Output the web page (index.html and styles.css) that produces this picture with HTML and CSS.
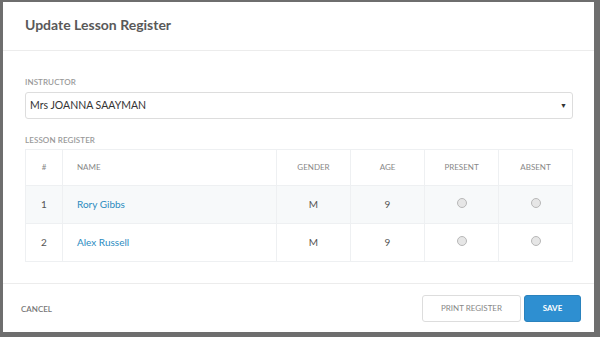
FILE: index.html
```html
<!DOCTYPE html>
<html lang="en">
<head>
    <meta charset="UTF-8">
    <title>Update Lesson Register</title>
    <link rel="stylesheet" href="styles.css">
</head>
<body>

<div class="modal">
    <div class="modal-header">
        <h2>Update Lesson Register</h2>
    </div>
    <div class="modal-body">
        <div class="label">INSTRUCTOR</div>
        <div class="select">
            <span>Mrs JOANNA SAAYMAN</span>
            <span class="caret">&#9660;</span>
        </div>
        <div class="label">LESSON REGISTER</div>
        <table class="register">
            <thead>
                <tr>
                    <th class="col-num">#</th>
                    <th class="col-name">NAME</th>
                    <th class="col-mid">GENDER</th>
                    <th class="col-mid">AGE</th>
                    <th class="col-mid">PRESENT</th>
                    <th>ABSENT</th>
                </tr>
            </thead>
            <tbody>
                <tr class="shade">
                    <td class="col-num">1</td>
                    <td class="col-name"><a href="#">Rory Gibbs</a></td>
                    <td>M</td>
                    <td>9</td>
                    <td><span class="radio"></span></td>
                    <td><span class="radio"></span></td>
                </tr>
                <tr>
                    <td class="col-num">2</td>
                    <td class="col-name"><a href="#">Alex Russell</a></td>
                    <td>M</td>
                    <td>9</td>
                    <td><span class="radio"></span></td>
                    <td><span class="radio"></span></td>
                </tr>
            </tbody>
        </table>
    </div>
    <div class="modal-footer">
        <button class="link-btn">CANCEL</button>
        <div class="actions">
            <button class="print-btn">PRINT REGISTER</button>
            <button class="save-btn">SAVE</button>
        </div>
    </div>
</div>

</body>
</html>
```

FILE: styles.css
```css
html, body {
    margin: 0;
    height: 100%;
}
body {
    background: #6e6e6e;
    font-family: Lato, "Open Sans", sans-serif;
    padding: 2px 6px 5px 3px;
    box-sizing: border-box;
}
.modal {
    background: #fff;
    height: 100%;
    display: flex;
    flex-direction: column;
}
.modal-header {
    height: 48px;
    border-bottom: 1px solid #ececec;
    padding: 0 22px;
    display: flex;
    align-items: center;
}
.modal-header h2 {
    margin: 0 0 3px;
    font-size: 14px;
    font-weight: 700;
    color: #595959;
}
.modal-body {
    padding: 26px 21px 0 22px;
    height: 207px;
}
.label {
    font-size: 8px;
    color: #999;
    font-weight: 600;
    letter-spacing: 0.1px;
    height: 14px;
}
.select {
    height: 25px;
    border: 1px solid #ddd;
    border-radius: 3px;
    display: flex;
    align-items: center;
    justify-content: space-between;
    padding: 0 5px 0 4px;
    font-size: 10.5px;
    color: #333;
    margin: 1px 0 16px;
}
.caret {
    font-size: 7px;
    color: #333;
}
.register {
    width: 100%;
    table-layout: fixed;
    border-collapse: collapse;
    border: 1px solid #eef0f2;
    font-size: 10px;
    color: #555;
}
.register th, .register td {
    border: 1px solid #eef0f2;
    text-align: center;
    padding: 0;
}
.register th {
    height: 35px;
    font-size: 8px;
    font-weight: 400;
    color: #888;
}
.register td {
    height: 37px;
}
.register .col-num {
    width: 36px;
}
.register .col-name {
    text-align: left;
    padding-left: 14px;
    width: 199px;
}
.register .col-mid {
    width: 73px;
}
.shade td {
    background: #f7f9fa;
}
.register a {
    color: #2b8bbf;
    text-decoration: none;
    font-size: 10px;
}
.radio {
    display: inline-block;
    width: 8px;
    height: 8px;
    border-radius: 50%;
    border: 1px solid #b8b8b8;
    background: #e6e6e6;
    margin-top: -6px;
    vertical-align: middle;
}
.modal-footer {
    margin-top: auto;
    border-top: 1px solid #ececec;
    height: 48px;
    display: flex;
    align-items: center;
    justify-content: space-between;
    padding: 0 13px 0 18px;
}
.link-btn {
    background: none;
    border: none;
    font-family: inherit;
    font-size: 8px;
    font-weight: 600;
    color: #777;
    padding: 0;
    margin-top: 1px;
}
.actions {
    display: flex;
    gap: 3px;
}
.print-btn, .save-btn {
    height: 27px;
    border-radius: 3px;
    font-family: inherit;
    font-size: 8px;
    cursor: pointer;
}
.print-btn {
    width: 99px;
    background: #fff;
    border: 1px solid #ddd;
    color: #888;
}
.save-btn {
    width: 57px;
    background: #2e8fd1;
    border: 1px solid #2a82bd;
    color: #fff;
    font-weight: 700;
}
```
